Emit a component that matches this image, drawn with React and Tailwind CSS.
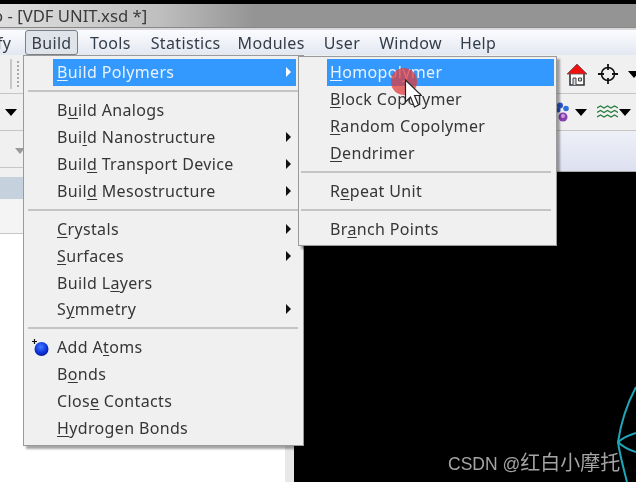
import React from "react";

const FONT = "font-['Noto_Sans','Liberation_Sans',sans-serif]";

// [before, underlined, after, hasArrow, highlighted, atomIcon]
const buildGroups = [
  [["", "B", "uild Polymers", true, true]],
  [
    ["B", "u", "ild Analogs"],
    ["Bui", "l", "d Nanostructure", true],
    ["Buil", "d", " Transport Device", true],
    ["Buil", "d", " Mesostructure", true],
  ],
  [
    ["", "C", "rystals", true],
    ["", "S", "urfaces", true],
    ["Build L", "a", "yers"],
    ["S", "y", "mmetry", true],
  ],
  [
    ["Add A", "t", "oms", false, false, true],
    ["B", "o", "nds"],
    ["Clos", "e", " Contacts"],
    ["", "H", "ydrogen Bonds"],
  ],
];

const polymerGroups = [
  [
    ["", "H", "omopolymer", false, true],
    ["", "B", "lock Copolymer"],
    ["", "R", "andom Copolymer"],
    ["", "D", "endrimer"],
  ],
  [["R", "e", "peat Unit"]],
  [["Br", "a", "nch Points"]],
];

const AtomIcon = () => (
  <svg width="20" height="18" viewBox="0 0 20 18" className="absolute left-[6px] top-[5px]">
    <defs>
      <radialGradient id="atom" cx="45%" cy="35%" r="65%">
        <stop offset="0%" stopColor="#3f7bff" />
        <stop offset="70%" stopColor="#0b2fd8" />
        <stop offset="100%" stopColor="#0a1f90" />
      </radialGradient>
    </defs>
    <path d="M2 2.500h5M4.500 0v5" stroke="#111" strokeWidth="1.2" />
    <circle cx="11.500" cy="10" r="7" fill="url(#atom)" />
  </svg>
);

const Row = ({ item, slot, textPad, arrowPad }) => {
  const [pre, under, post, arrow, active, atom] = item;
  return (
    <div className={`relative h-[26.8px] flex items-center ${slot}`}>
      {atom && <AtomIcon />}
      <div className={`flex-1 h-full flex items-center justify-between ${textPad} ${arrowPad} ${active ? "bg-[#3399ff] text-[#e8f2ff]" : "text-[#363636]"}`}>
        <span className="whitespace-pre">
          {pre}
          <u className="underline-offset-2">{under}</u>
          {post}
        </span>
        {arrow && (
          <span className={`w-0 h-0 border-y-[5px] border-y-transparent border-l-[5px] ${active ? "border-l-white" : "border-l-[#111]"}`} />
        )}
      </div>
    </div>
  );
};

const Separator = ({ inset }) => (
  <div className={`h-[11.3px] flex items-center ${inset}`}>
    <div className="w-full h-[2px] bg-[#c4c4c4]" />
  </div>
);

const Menu = ({ groups, className, slot, textPad, arrowPad, rightGap, inset }) => (
  <div className={`absolute bg-[#f0f0f0] border border-[#9a9a9a] shadow-[3px_3px_2px_rgba(0,0,0,0.35)] ${FONT} text-[16px] tracking-[0.35px] ${className}`}>
    {groups.map((group, i) => (
      <div key={i}>
        {i > 0 && <Separator inset={inset} />}
        {group.map((item, j) => (
          <div key={j} className={rightGap}>
            <Row item={item} slot={slot} textPad={textPad} arrowPad={arrowPad} />
          </div>
        ))}
      </div>
    ))}
  </div>
);

const Caret = ({ color = "border-t-black" }) => (
  <span className={`block w-0 h-0 border-x-[6px] border-x-transparent border-t-[7px] ${color}`} />
);

const HomeIcon = () => (
  <svg width="22" height="25" viewBox="0 0 22 25">
    <path d="M4 11v12h14V11" fill="#fdfdfd" stroke="#333" strokeWidth="1.6" />
    <path d="M1 12L11 2l10 10z" fill="#f01010" stroke="#555" strokeWidth="0.8" />
    <path d="M7 23v-7h3v7M12.500 16h3v3h-3z" fill="#cfd8e0" stroke="#444" />
  </svg>
);

const CrosshairIcon = () => (
  <svg width="22" height="22" viewBox="0 0 22 22" fill="none" stroke="#111" strokeWidth="1.5">
    <circle cx="11" cy="11" r="6.500" />
    <path d="M11 1v6M11 15v6M1 11h6M15 11h6" strokeWidth="1.800" />
  </svg>
);

const MoleculeIcon = () => (
  <svg width="17" height="20" viewBox="0 0 17 20">
    <circle cx="6" cy="3.500" r="3" fill="#2a55c8" />
    <circle cx="12" cy="6.500" r="2.800" fill="#2f6fd8" />
    <circle cx="4" cy="8" r="2.500" fill="#2a55c8" />
    <circle cx="9" cy="15" r="4.500" fill="#8a3fb0" />
    <circle cx="9" cy="14" r="2" fill="#c9a0e0" />
  </svg>
);

const WavesIcon = () => (
  <svg width="21" height="14" viewBox="0 0 21 14" fill="none" stroke="#1f7a3a" strokeWidth="1.100">
    <path d="M0 3l3.500-2 3.500 2 3.500-2 3.500 2 3.500-2 3.500 2" />
    <path d="M0 7.500l3.500-2 3.500 2 3.500-2 3.500 2 3.500-2 3.500 2" />
    <path d="M0 12l3.500-2 3.500 2 3.500-2 3.500 2 3.500-2 3.500 2" />
  </svg>
);

const App = () => {
  return (
    <div className={`relative w-[636px] h-[482px] overflow-hidden bg-white blur-[0.5px] ${FONT}`}>
      {/* title bar */}
      <div className="h-[4px] bg-black" />
      <div className="h-[24px] flex items-center bg-gradient-to-r from-[#dedede] via-[#bfbfbf] via-25% to-[#949494] to-40% border-b border-[#888]">
        <span className="ml-[-7px] text-[16.7px] text-[#3a3a3a] whitespace-pre">o - [VDF UNIT.xsd *]</span>
      </div>
      <div className="h-[2px] bg-[#d8d8d8]" />

      {/* menu bar */}
      <div className="h-[25px] flex items-center bg-gradient-to-b from-[#fbfcfe] to-[#e3e7f1] text-[16px] tracking-[0.35px] text-[#333d4a]">
        <span className="w-[25px] ml-[-3px] pl-0">fy</span>
        <span className="ml-[3px] w-[53px] h-[25px] flex items-center justify-center rounded-[3px] border border-[#7a8088] bg-[#dfe3ea]">Build</span>
        <span className="ml-[12px]">Tools</span>
        <span className="ml-[20px]">Statistics</span>
        <span className="ml-[17px]">Modules</span>
        <span className="ml-[19px]">User</span>
        <span className="ml-[19px]">Window</span>
        <span className="ml-[18px]">Help</span>
      </div>

      {/* toolbars */}
      <div className="h-[39px] flex items-center justify-between bg-[#f0f0f0] border-b border-[#c6c6c6]">
        <div className="flex h-full items-center">
          <div className="w-[12px] h-[30px] border-r-2 border-[#c8c8c8]" />
          <div className="ml-[5px] w-[2px] h-[26px] border-r-2 border-dotted border-[#aaa]" />
        </div>
        <div className="flex items-center gap-[9px] mr-[-4px]">
          <HomeIcon />
          <CrosshairIcon />
          <Caret />
        </div>
      </div>
      <div className="h-[37px] flex items-center justify-between bg-[#f0f0f0] border-b border-[#c6c6c6]">
        <div className="ml-[5px]">
          <Caret />
        </div>
        <div className="flex items-center mr-[5px]">
          <MoleculeIcon />
          <span className="ml-[4px] flex"><Caret /></span>
          <span className="ml-[10px] flex"><WavesIcon /></span>
          <span className="ml-[1px] flex"><Caret /></span>
        </div>
      </div>

      {/* work area */}
      <div className="h-[351px] flex">
        <div className="w-[285px] flex flex-col">
          <div className="h-[37px] bg-[#f0f0f0] border-b border-[#c6c6c6]" />
          <div className="h-[9px] bg-[#f0f0f0]" />
          <div className="h-[22px] bg-[#c6d1de]" />
          <div className="h-[35px] bg-[#f4f4f4] border-b border-[#c6c6c6]" />
          <div className="flex-1 bg-white" />
        </div>
        <div className="w-[9px] bg-[#e8e8e8]" />
        <div className="flex-1 flex flex-col">
          <div className="h-[41px] bg-gradient-to-b from-[#eef0f8] to-[#dde0ef] border-b border-[#aaa]" />
          <div className="flex-1 bg-black" />
        </div>
      </div>

      <span className="absolute left-[15px] top-[148px] w-0 h-0 border-x-[5px] border-x-transparent border-t-[6px] border-t-[#9a9a9a]" />

      <Menu
        groups={buildGroups}
        className="left-[23px] top-[55px] w-[281px] h-[391px] pt-[3px]"
        slot="pl-[29px]"
        textPad="pl-[4px]"
        arrowPad="pr-[5px]"
        rightGap="pr-[7px]"
        inset="ml-[4px] mr-[5px]"
      />
      <Menu
        groups={polymerGroups}
        className="left-[298px] top-[56px] w-[259px] h-[190px] pt-[2px]"
        slot="pl-[28px]"
        textPad="pl-[3px]"
        arrowPad="pr-[5px]"
        rightGap="pr-[2px]"
        inset="ml-[2px] mr-[5px]"
      />

      {/* mouse highlight + pointer */}
      <div className="absolute left-[391px] top-[68px] w-[26px] h-[27px] rounded-full bg-[#e03c3c]/75" />
      <svg className="absolute left-[404px] top-[79px]" width="18" height="30" viewBox="0 0 18 30">
        <path d="M1.500 1v22l5-5 4 10 4-2-4-9.500h7z" fill="#fff" stroke="#222" strokeWidth="1.200" />
      </svg>

      {/* model in viewport */}
      <svg className="absolute left-[600px] top-[360px]" width="36" height="122" viewBox="0 0 36 122" fill="none" stroke="#1fa6b8" strokeWidth="2">
        <path d="M36 27C28 42 21 62 18 82c2 14 6 28 9 40" />
        <path d="M18 82c5-4 11-7 18-9" />
        <path d="M18 82c5 5 11 8 18 10" />
      </svg>

      <span className="absolute left-[448px] top-[451px] text-[17.5px] leading-[24px] text-[#a4a4a4] font-['Liberation_Sans','Noto_Sans_CJK_SC',sans-serif] whitespace-pre">
        CSDN @<span className="text-[20px]">红白小摩托</span>
      </span>
    </div>
  );
};

export default App;
